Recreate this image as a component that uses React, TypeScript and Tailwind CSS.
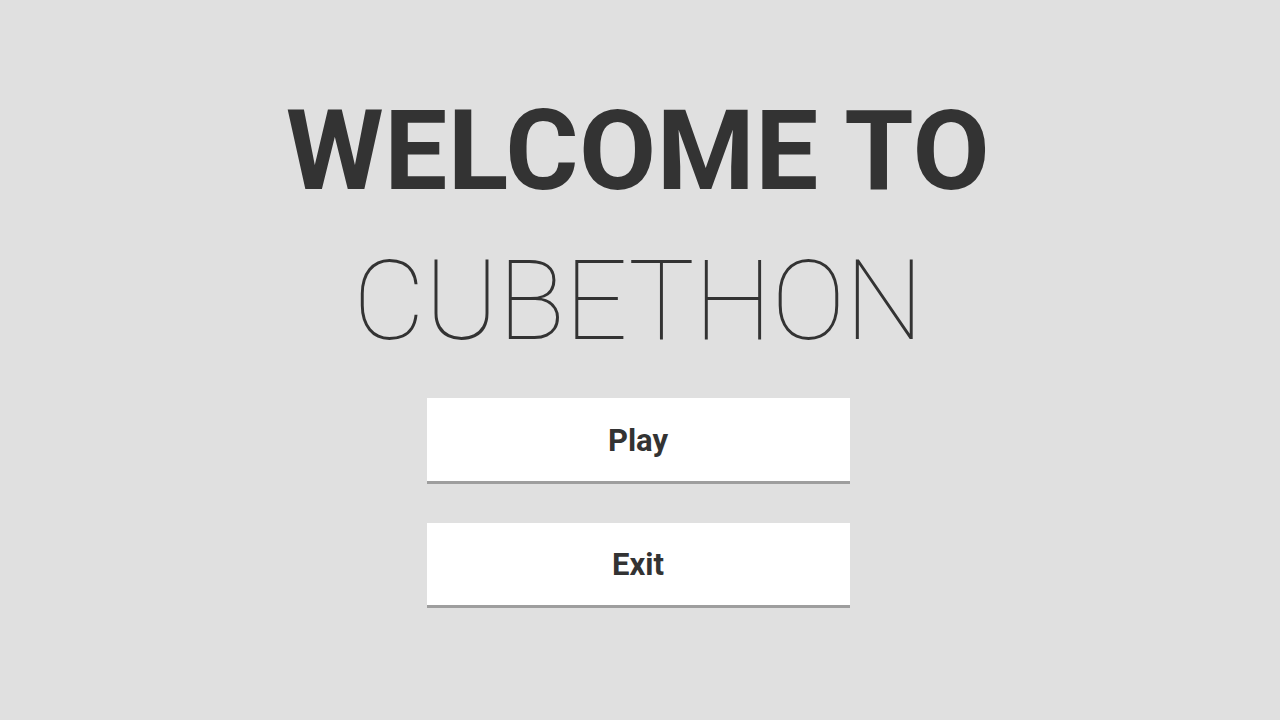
export default function App() {
  return (
    <div
      className="flex min-h-[720px] w-full flex-col items-center bg-[#e0e0e0] pr-[4px] pt-[76px] text-[#333333]"
      style={{ fontFamily: 'Roboto, "Liberation Sans", sans-serif' }}
    >
      <h1 className="text-[112px] font-bold leading-[150px] tracking-[0.5px]">WELCOME TO</h1>
      <h2 className="text-[111px] font-thin leading-[150px] tracking-[-0.5px]">CUBETHON</h2>
      <div className="mt-[22px] flex flex-col gap-[39px]">
        <button className="h-[86px] w-[423px] border-b-[3px] border-[#9e9e9e] bg-white pt-[3px] text-[31px] font-bold">
          Play
        </button>
        <button className="h-[85px] w-[423px] border-b-[3px] border-[#9e9e9e] bg-white pt-[3px] text-[31px] font-bold">
          Exit
        </button>
      </div>
    </div>
  )
}
